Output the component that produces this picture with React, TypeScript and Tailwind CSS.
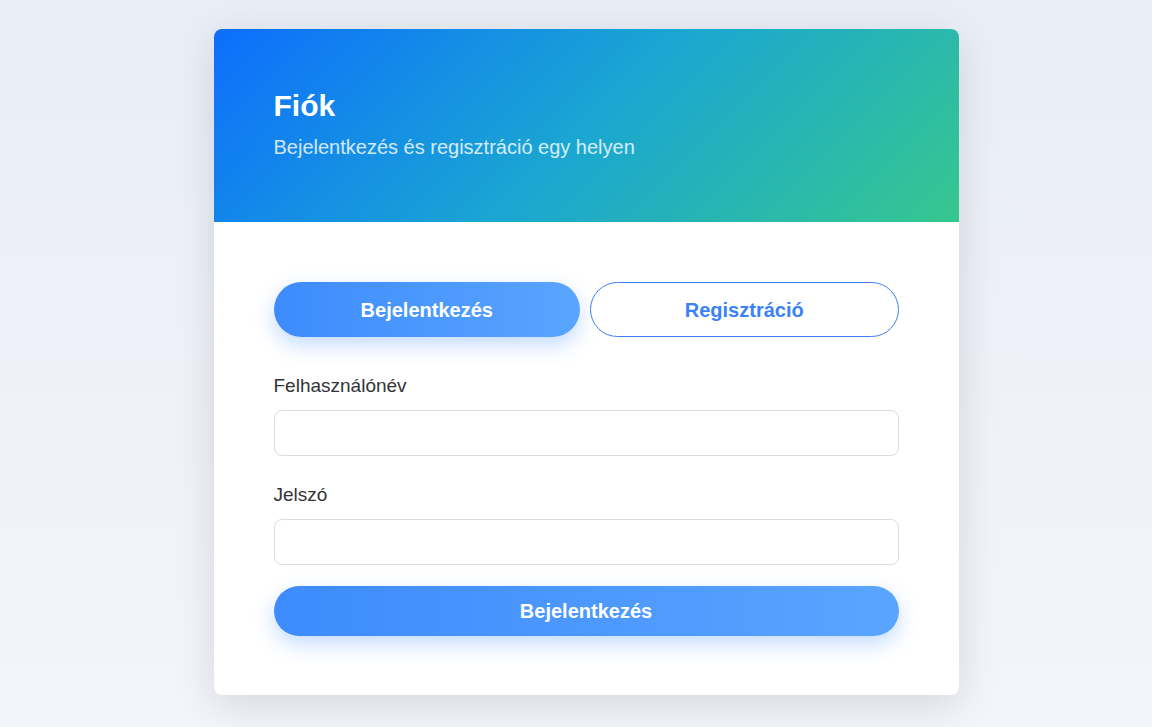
import React, { useState } from "react";

export default function App() {
  const [tab, setTab] = useState<"login" | "register">("login");
  const active =
    "flex-1 h-[55px] rounded-full text-[20px] font-bold text-white bg-[linear-gradient(90deg,#3d8bfd,#5aa5ff)] shadow-[0_8px_20px_rgba(61,139,253,0.3)]";
  const inactive =
    "flex-1 h-[55px] rounded-full text-[20px] font-bold text-[#3b82f6] bg-white border border-[#3b82f6]";
  return (
    <div
      className="min-h-screen w-full bg-[linear-gradient(180deg,#e9edf6_0%,#f3f5fa_100%)] flex justify-center pt-[29px] pl-[20px]"
      style={{ fontFamily: '"Liberation Sans", Arial, sans-serif' }}
    >
      <div className="w-[745px] h-[666px] bg-white rounded-[8px] overflow-hidden shadow-[0_10px_40px_rgba(0,0,0,0.12)] flex flex-col">
        <div className="bg-[linear-gradient(135deg,#0d6efd_0%,#1aa6d2_50%,#36c78e_100%)] px-[60px] pt-[60px] pb-[61px]">
          <h1 className="text-[30px] leading-[34px] font-bold text-white m-0">Fiók</h1>
          <p className="mt-[10px] text-[20px] leading-[28px] text-white/80">
            Bejelentkezés és regisztráció egy helyen
          </p>
        </div>
        <div className="p-[60px] flex flex-col">
          <div className="flex gap-[10px] mb-[35px]">
            <button onClick={() => setTab("login")} className={tab === "login" ? active : inactive}>
              Bejelentkezés
            </button>
            <button onClick={() => setTab("register")} className={tab === "register" ? active : inactive}>
              Regisztráció
            </button>
          </div>
          <label className="block text-[19px] leading-[28px] text-[#333]">Felhasználónév</label>
          <input
            type="text"
            className="mt-[10px] h-[46px] w-full rounded-[8px] border border-[#dcdcdc] px-3 outline-none"
          />
          <label className="block mt-[25px] text-[19px] leading-[28px] text-[#333]">Jelszó</label>
          <input
            type="password"
            className="mt-[10px] h-[46px] w-full rounded-[8px] border border-[#dcdcdc] px-3 outline-none"
          />
          <button className="mt-[21px] h-[50px] w-full rounded-full text-[20px] font-bold text-white bg-[linear-gradient(90deg,#3d8bfd,#5aa5ff)] shadow-[0_8px_20px_rgba(61,139,253,0.3)]">
            {tab === "login" ? "Bejelentkezés" : "Regisztráció"}
          </button>
        </div>
      </div>
    </div>
  );
}
